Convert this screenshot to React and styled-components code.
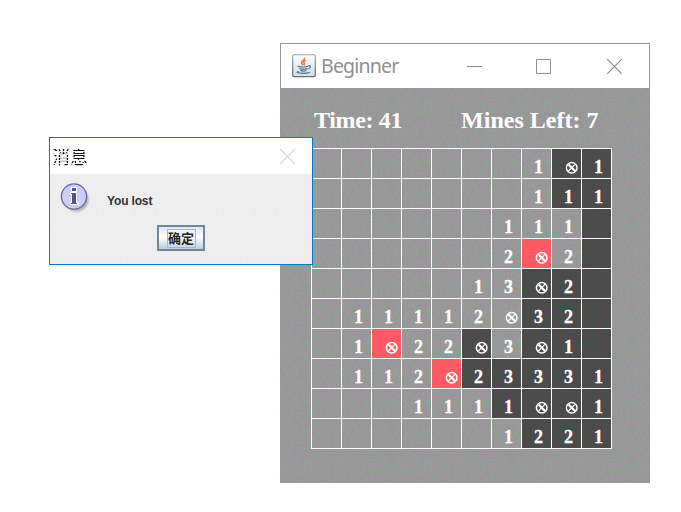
import React from 'react';
import styled, { createGlobalStyle } from 'styled-components';

/* Irregular one-pixel grain over a base tone, as a 256-colour display dithers it. */
const dither = (base, a, b) => {
  const size = 30;
  let seed = 7;
  const runs = { [a]: '', [b]: '' };
  for (let y = 0; y < size; y += 1) {
    for (let x = 0; x < size; x += 1) {
      seed = (seed * 1103515245 + 12345) % 2147483648;
      const flip = seed / 2147483648 < 0.28 ? 1 : 0;
      runs[(x + y + flip) % 2 ? a : b] += `M${x} ${y}h1v1h-1z`;
    }
  }
  const svg = `<svg xmlns='http://www.w3.org/2000/svg' width='${size}' height='${size}' shape-rendering='crispEdges'><path fill='${a}' d='${runs[a]}'/><path fill='${b}' d='${runs[b]}'/></svg>`;
  return `${base} url("data:image/svg+xml,${encodeURIComponent(svg)}")`;
};

const shades = {
  open: 'transparent',
  dark: dither('#4b4b4b', '#415341', '#564356'),
  hit: '#ff5963',
};

const Global = createGlobalStyle`
  body { margin: 0; background: #fff; overflow: hidden; }
  * { box-sizing: border-box; }
`;

const Desktop = styled.main`
  position: relative;
  width: 681px;
  height: 512px;
  background: #fff;
`;

const GameWindow = styled.section`
  position: absolute;
  left: 280px;
  top: 43px;
  width: 370px;
  height: 440px;
  border: 1px solid #9a969b;
  display: flex;
  flex-direction: column;
`;

const TitleBar = styled.header`
  height: 44px;
  flex: none;
  display: flex;
  align-items: center;
  padding: 0 27px 0 11px;
  background: #fff;
`;

const WindowTitle = styled.h1`
  margin: 0 auto 0 5px;
  font: 400 19.5px/24px "Noto Sans", sans-serif;
  letter-spacing: -0.8px;
  color: #8f8f94;
`;

const Controls = styled.div`
  display: flex;
  align-items: center;
  gap: 54px;

  svg:last-child { margin-left: 2px; }
`;

const Board = styled.div`
  flex: 1;
  padding: 17px 0 0 30px;
  background: ${dither('#999999', '#92a292', '#9f909f')};
`;

const Status = styled.div`
  display: flex;
  gap: 59px;
  height: 43px;
  padding-left: 3px;
  color: #fff;
  font: 700 24px/30px "Liberation Serif", serif;
  white-space: nowrap;
`;

const Stat = styled.span`
  display: block;
  letter-spacing: ${({ $tight }) => ($tight ? '-0.35px' : '0')};
`;

const Grid = styled.div`
  display: grid;
  width: 301px;
  grid-template-columns: repeat(10, 30px);
  grid-auto-rows: 30px;
  border: solid #fff;
  border-width: 1px 0 0 1px;
`;

const Cell = styled.div`
  border: solid #fff;
  border-width: 0 1px 1px 0;
  padding: 8px 0 0 12px;
  background: ${({ $kind }) => shades[$kind]};
  color: #fff;
  font: 700 18px/20px "Liberation Serif", serif;
  -webkit-text-stroke: 0.3px #fff;
`;

const MineIcon = styled.svg`
  display: block;
  margin: 4px 0 0 1px;
`;

const Dialog = styled.section`
  position: absolute;
  left: 49px;
  top: 137px;
  width: 264px;
  height: 128px;
  border: 1px solid #0078d7;
  background: ${dither('#eeeeee', '#e8efea', '#f4ecf3')};
`;

const DialogBar = styled.header`
  height: 36px;
  padding: 0 17px 0 2px;
  display: flex;
  align-items: center;
  justify-content: space-between;
  background: #fff;
`;

const Caption = styled.span`
  font: 400 18px/20px "Noto Sans CJK SC", sans-serif;
  color: #111;
  mask-image: repeating-linear-gradient(#000 0 2px, rgba(0, 0, 0, 0.15) 2px 3px);
`;

const DialogBody = styled.div`
  display: flex;
  gap: 15px;
  height: 51px;
  padding: 8px 0 0 10px;
`;

const Message = styled.p`
  margin: 11px 0 0;
  font: 700 12px/16px "Liberation Sans", sans-serif;
  letter-spacing: -0.15px;
  color: #333;
`;

const OkButton = styled.button`
  display: flex;
  align-items: center;
  justify-content: center;
  width: 48px;
  height: 26px;
  margin: 0 0 0 107px;
  padding: 0;
  border: 2px solid #718798;
  background: linear-gradient(#dce8f2, #fff 45%, #b8cfe5);
`;

const OkLabel = styled.span`
  border: 1px solid #a3b8cc;
  height: 19px;
  width: 29px;
  font: 700 13px/18px "Liberation Sans", "Noto Sans CJK SC", sans-serif;
  color: #262626;
`;

const ROWS = [
  ['', '', '', '', '', '', '', '1', '*d', '1d'],
  ['', '', '', '', '', '', '', '1', '1d', '1d'],
  ['', '', '', '', '', '', '1', '1', '1', 'd'],
  ['', '', '', '', '', '', '2', '*h', '2', 'd'],
  ['', '', '', '', '', '1', '3', '*d', '2d', 'd'],
  ['', '1', '1', '1', '1', '2', '*', '3d', '2d', 'd'],
  ['', '1', '*h', '2', '2', '*d', '3', '*d', '1d', 'd'],
  ['', '1', '1', '2', '*h', '2d', '3d', '3d', '3d', '1d'],
  ['', '', '', '1', '1', '1', '1d', '*d', '*d', '1d'],
  ['', '', '', '', '', '', '1', '2d', '2d', '1d'],
];

function kindOf(code) {
  if (code.endsWith('d')) return 'dark';
  if (code.endsWith('h')) return 'hit';
  return 'open';
}

function Mine() {
  return (
    <MineIcon width="13" height="13" viewBox="0 0 13 13" fill="none" stroke="#fff">
      <circle cx="6.7" cy="6.7" r="5.3" strokeWidth="1.5" />
      <path d="M3.5 3.5 10 10" strokeWidth="2.4" />
      <path d="M10 3.4 3.4 10" strokeWidth="1.2" />
    </MineIcon>
  );
}

function JavaIcon() {
  return (
    <svg width="24" height="24" viewBox="0 0 24 24" fill="none">
      <defs>
        <linearGradient id="tile" x1="0" y1="0" x2="0" y2="1">
          <stop offset="0" stopColor="#fff" />
          <stop offset="1" stopColor="#d5dbe2" />
        </linearGradient>
        <linearGradient id="rim" x1="0" y1="0" x2="0" y2="1">
          <stop offset="0" stopColor="#9fa5aa" />
          <stop offset="1" stopColor="#36566f" />
        </linearGradient>
      </defs>
      <rect x="0.7" y="0.7" width="22.6" height="22" rx="1.8" fill="url(#tile)" stroke="url(#rim)" strokeWidth="1.1" />
      <path d="M12.4 3.8c1.2 2.4-3.8 3.1-2.9 5.3.3.8 1.2 1.3 1.5 2M14 6.4c-2.7 1-2.6 2-1.7 3 .5.7.2 1.2-.5 1.6" stroke="#ed7330" strokeWidth="1.5" />
      <path d="M6.4 11.8c-1 .8.4 1.2 4.8 1.2 2.4 0 4.2-.3 4.7-.7M7.4 14.4c1.8 1.1 5.8 1 7.8.2M8.4 16.4c1.8.8 4.4.7 6.1.1M16.2 11.8c3-.6 3.1 2-.5 3.2M7 17.6c-3.4.5-2.6 1.6 4.2 1.7 4.4 0 6.4-.5 6-1.4" stroke="#477493" strokeWidth="1.2" />
    </svg>
  );
}

function CrossIcon({ color }) {
  return (
    <svg width="15" height="15" viewBox="0 0 15 15" stroke={color} strokeWidth="1.2">
      <path d="M0 0 15 15M15 0 0 15" />
    </svg>
  );
}

function InfoIcon() {
  return (
    <svg width="32" height="32" viewBox="0 0 32 32">
      <defs>
        <filter id="soft" x="-20%" y="-20%" width="150%" height="150%">
          <feGaussianBlur stdDeviation="1.3" />
        </filter>
      </defs>
      <circle cx="16.5" cy="17.5" r="12" fill="#888" opacity=".6" filter="url(#soft)" />
      <circle cx="14" cy="14.5" r="12.6" fill="#ccccff" stroke="#666699" strokeWidth="1.3" />
      <path d="M11 5h6v5h-6zM10 10h7v10h1.5v3H10v-3h1v-7h-1z" fill="#fff" />
      <path d="M12 6h4v3h-4zM11 11h5v10h1v1h-6v-1h1v-9h-1z" fill="#555585" />
    </svg>
  );
}

export default function App() {
  return (
    <Desktop>
      <Global />
      <GameWindow>
        <TitleBar>
          <JavaIcon />
          <WindowTitle>Beginner</WindowTitle>
          <Controls>
            <svg width="15" height="15" viewBox="0 0 15 15" stroke="#8d8d8d"><path d="M0 7.5h15" /></svg>
            <svg width="15" height="15" viewBox="0 0 15 15" stroke="#968c96" fill="none"><path d="M.5.5h14v14H.5z" /></svg>
            <CrossIcon color="#8d8d8d" />
          </Controls>
        </TitleBar>
        <Board>
          <Status>
            <Stat $tight>Time: 41</Stat>
            <Stat>Mines Left: 7</Stat>
          </Status>
          <Grid>
            {ROWS.flatMap((row, y) =>
              row.map((code, x) => (
                <Cell key={`${x}-${y}`} $kind={kindOf(code)}>
                  {code[0] === '*' ? <Mine /> : code.replace(/\D/g, '')}
                </Cell>
              ))
            )}
          </Grid>
        </Board>
      </GameWindow>
      <Dialog>
        <DialogBar>
          <Caption>消息</Caption>
          <CrossIcon color="#d0d4d0" />
        </DialogBar>
        <DialogBody>
          <InfoIcon />
          <Message>You lost</Message>
        </DialogBody>
        <OkButton>
          <OkLabel>确定</OkLabel>
        </OkButton>
      </Dialog>
    </Desktop>
  );
}
